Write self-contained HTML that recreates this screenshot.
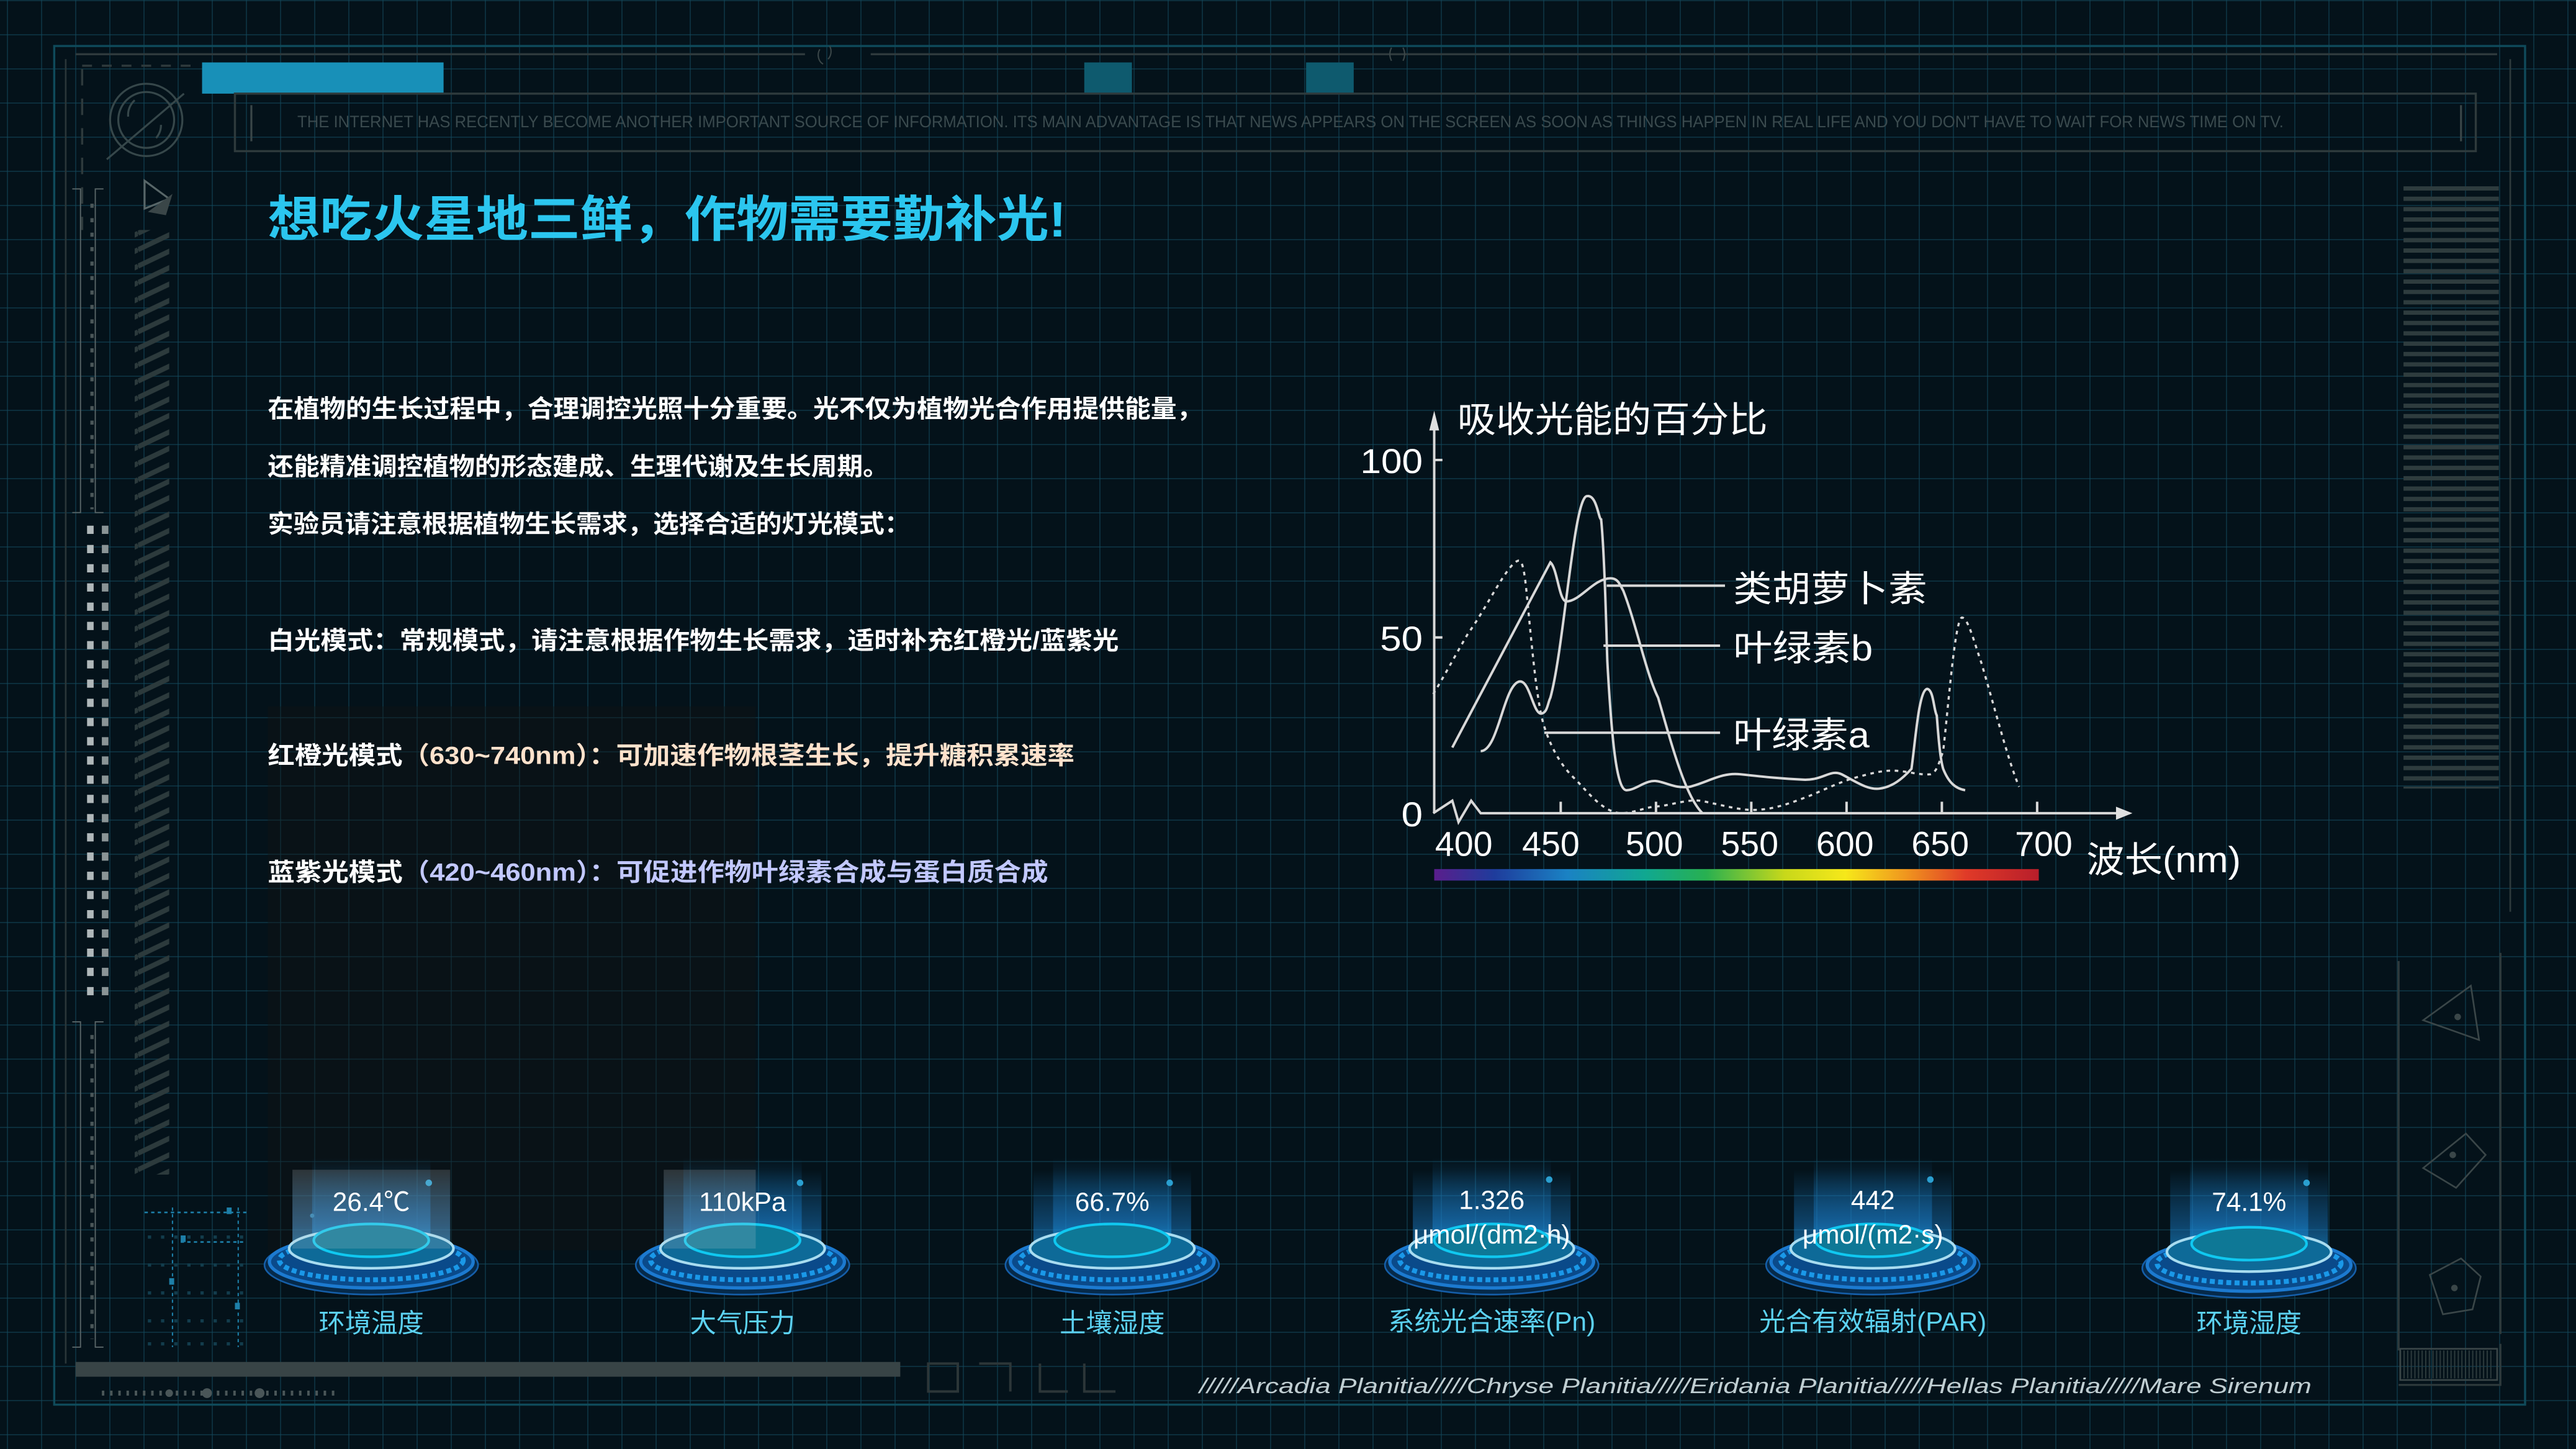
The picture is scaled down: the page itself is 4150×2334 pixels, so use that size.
<!DOCTYPE html>
<html><head><meta charset="utf-8">
<style>
html,body{margin:0;padding:0;}
body{width:4150px;height:2334px;overflow:hidden;background-color:#04121a;
background-image:
linear-gradient(to right, rgba(18,70,88,0.55) 2px, transparent 2px),
linear-gradient(to bottom, rgba(18,70,88,0.55) 2px, transparent 2px);
background-size:55px 55px,55px 55px;
background-position:11px 0,0 0;}
svg{position:absolute;left:0;top:0;width:4150px;height:2334px;}
text{font-family:"Liberation Sans","Noto Sans CJK SC",sans-serif;}
</style></head><body>
<svg viewBox="0 0 1568 882" preserveAspectRatio="none" xmlns="http://www.w3.org/2000/svg">
<defs>
<linearGradient id="spec" x1="0" x2="1" y1="0" y2="0">
<stop offset="0" stop-color="#5a1e8c"/><stop offset="0.1" stop-color="#1e3c9c"/><stop offset="0.22" stop-color="#1a82c4"/><stop offset="0.35" stop-color="#10a890"/><stop offset="0.45" stop-color="#28b050"/><stop offset="0.58" stop-color="#c8d81a"/><stop offset="0.68" stop-color="#f6e81a"/><stop offset="0.78" stop-color="#f0961e"/><stop offset="0.88" stop-color="#e03a28"/><stop offset="1" stop-color="#b81e2a"/>
</linearGradient>
<linearGradient id="col" x1="0" x2="0" y1="0" y2="1">
<stop offset="0" stop-color="#1a8ad8" stop-opacity="0"/><stop offset="0.6" stop-color="#1a7cc8" stop-opacity="0.45"/><stop offset="1" stop-color="#1a9ae0" stop-opacity="0.7"/>
</linearGradient>
<pattern id="hatch" width="21" height="10" patternUnits="userSpaceOnUse"><path d="M0 12 L21 2 M0 2 L21 -8 M0 22 L21 12" stroke="#2c3a3c" stroke-width="3"/></pattern>
<pattern id="hl" width="10" height="6.3" patternUnits="userSpaceOnUse"><rect width="10" height="2.6" fill="#2e3c3e"/></pattern>
<pattern id="vl" width="2.2" height="10" patternUnits="userSpaceOnUse"><rect width="0.7" height="10" fill="#2e3c3e"/></pattern>
</defs>

<rect x="33" y="28" width="1504" height="827" fill="none" stroke="#0f4a5a" stroke-width="1.3"/>
<line x1="46" y1="33" x2="490" y2="33" stroke="#2e3a3c" stroke-width="1.3"/>
<line x1="530" y1="33" x2="1520" y2="33" stroke="#2e3a3c" stroke-width="1.3"/>
<line x1="1528" y1="36" x2="1528" y2="555" stroke="#2e3a3c" stroke-width="1"/>
<line x1="40" y1="36" x2="40" y2="830" stroke="#2a3638" stroke-width="1"/>
<path d="M499 30 a5 6 0 0 0 2 9 M505 28 a5 6 0 0 1 -1 8" fill="none" stroke="#3a4648" stroke-width="0.8"/>
<path d="M847 29 q-2 4 0 8 M854 29 q2 4 0 8" fill="none" stroke="#3a4648" stroke-width="0.8"/>
<path d="M50 40 H120" stroke="#2e3a3c" stroke-width="1.3" stroke-dasharray="6 6"/>
<path d="M50 42 V140" stroke="#2e3a3c" stroke-width="1.3" stroke-dasharray="10 8"/>
<rect x="123" y="38" width="147" height="19" fill="#1890b8"/>
<rect x="660" y="38" width="29" height="19" fill="#0e5a6e"/>
<rect x="795" y="38" width="29" height="19" fill="#0e5a6e"/>
<rect x="143" y="57" width="1364" height="35" fill="none" stroke="#2e3a3c" stroke-width="1.3"/>
<line x1="153" y1="64" x2="153" y2="86" stroke="#3a4648" stroke-width="1.2"/>
<line x1="1498" y1="64" x2="1498" y2="86" stroke="#3a4648" stroke-width="1.2"/>
<text x="181" y="77.5" font-size="10" fill="#3a4a4e" textLength="1209" lengthAdjust="spacingAndGlyphs">THE INTERNET HAS RECENTLY BECOME ANOTHER IMPORTANT SOURCE OF INFORMATION. ITS MAIN ADVANTAGE IS THAT NEWS APPEARS ON THE SCREEN AS SOON AS THINGS HAPPEN IN REAL LIFE AND YOU DON'T HAVE TO WAIT FOR NEWS TIME ON TV.</text>

<g fill="none" stroke="#36474a" stroke-width="1.2">
<circle cx="89" cy="73" r="22"/><circle cx="89" cy="73" r="17"/>
<path d="M82 61 a12 12 0 0 0 -4 10"/><path d="M98 76 a12 12 0 0 1 -3 8"/>
<line x1="65" y1="97" x2="112" y2="57"/>
</g>
<path d="M88 110 L103 121 L88 127 Z" fill="none" stroke="#586668" stroke-width="1.2"/>
<path d="M90 129 L105 118 L101 131 Z" fill="#3a4648"/>
<path d="M44 115 H49 V312 H44 M63 115 H58 V312 H63" fill="none" stroke="#5a6668" stroke-width="0.7"/>
<path d="M44 622 H49 V820 H44 M63 622 H58 V820 H63" fill="none" stroke="#5a6668" stroke-width="0.7"/>
<path d="M56 124 V310" stroke="#4a5658" stroke-width="2" stroke-dasharray="2.5 6.3"/>
<path d="M56 630 V815" stroke="#4a5658" stroke-width="2" stroke-dasharray="2.5 6.3"/>
<rect x="82" y="140" width="21" height="575" fill="url(#hatch)"/>
<path d="M55 320 V612" stroke="#b0b8ba" stroke-width="4" stroke-dasharray="5 6.7"/>
<path d="M64 320 V612" stroke="#8a9496" stroke-width="4" stroke-dasharray="5 6.7"/>
<g fill="#1d7fa8">
<path d="M88 738 H150" stroke="#1d7fa8" stroke-width="1" stroke-dasharray="2 2"/>
<path d="M110 756 H150" stroke="#1d7fa8" stroke-width="1" stroke-dasharray="2 2"/>
<path d="M105 735 V820 M145 735 V820" stroke="#1d7fa8" stroke-width="0.8" stroke-dasharray="2 2"/>
<rect x="138" y="735" width="3" height="4"/><rect x="110" y="752" width="3" height="4"/><rect x="103" y="778" width="3" height="4"/><rect x="143" y="793" width="3" height="4"/>
</g>
<path d="M90 753 H150 M90 770 H150 M90 787 H150 M90 804 H150 M90 818 H150" stroke="#123c4c" stroke-width="2" stroke-dasharray="2 6"/>
<rect x="46" y="829" width="502" height="9" fill="#384446"/>
<path d="M62 848 H207" stroke="#4a5658" stroke-width="3" stroke-dasharray="1.5 3.5"/>
<circle cx="126" cy="848" r="3" fill="#4a5658"/><circle cx="158" cy="848" r="3" fill="#4a5658"/><circle cx="103" cy="848" r="2.3" fill="#4a5658"/>
<g fill="none" stroke="#2c3638" stroke-width="1.5">
<rect x="565" y="830" width="18" height="17"/>
<path d="M596 830 H615 V847"/><path d="M633 830 V847 H650"/><path d="M660 830 V847 H679"/>
</g>
<rect x="1463" y="110" width="58" height="370" fill="url(#hl)"/>
<line x1="1460" y1="585" x2="1460" y2="822" stroke="#2e3a3c" stroke-width="1.3"/>
<line x1="1522" y1="580" x2="1522" y2="812" stroke="#2e3a3c" stroke-width="1.3"/>
<path d="M1522 818 V843 H1460" fill="none" stroke="#2e3a3c" stroke-width="1.2"/>
<rect x="1461" y="822" width="57" height="17" fill="url(#vl)"/>
<g fill="none" stroke="#3a4648" stroke-width="1">
<path d="M1504 600 L1475 621 L1509 633 Z"/>
<path d="M1501 690 L1475 711 L1495 723 L1513 703 Z"/>
<path d="M1498 766 L1479 776 L1487 800 L1505 797 L1510 777 Z"/>
<rect x="1461" y="821" width="59" height="19"/>
</g>
<g fill="#3a4648"><circle cx="1496" cy="619" r="2"/><circle cx="1493" cy="703" r="2"/><circle cx="1494" cy="784" r="2"/></g>

<rect x="163" y="430" width="297" height="331" fill="#121314" opacity="0.4"/>

<text x="163" y="144" font-size="30" font-weight="bold" fill="#2bc6ef" textLength="486" lengthAdjust="spacingAndGlyphs">想吃火星地三鲜，作物需要勤补光!</text>
<g font-size="15" font-weight="bold" fill="#ffffff">
<text x="163" y="254" textLength="569" lengthAdjust="spacingAndGlyphs">在植物的生长过程中，合理调控光照十分重要。光不仅为植物光合作用提供能量，</text>
<text x="163" y="289" textLength="378" lengthAdjust="spacingAndGlyphs">还能精准调控植物的形态建成、生理代谢及生长周期。</text>
<text x="163" y="324" textLength="391" lengthAdjust="spacingAndGlyphs">实验员请注意根据植物生长需求，选择合适的灯光模式：</text>
<text x="163" y="395" textLength="518" lengthAdjust="spacingAndGlyphs">白光模式：常规模式，请注意根据作物生长需求，适时补充红橙光/蓝紫光</text>
<text x="163" y="465" textLength="491" lengthAdjust="spacingAndGlyphs">红橙光模式<tspan fill="#ffe2cc">（630~740nm）：可加速作物根茎生长，提升糖积累速率</tspan></text>
<text x="163" y="536" textLength="475" lengthAdjust="spacingAndGlyphs">蓝紫光模式<tspan fill="#c2c8ff">（420~460nm）：可促进作物叶绿素合成与蛋白质合成</tspan></text>
</g>

<g stroke="#d8d8d8" fill="none" stroke-width="1.5">
<line x1="873" y1="495" x2="873" y2="256"/>
<path d="M870 262 L873 250 L876 262 Z" fill="#e0e0e0" stroke="none"/>
<path d="M872.4 495 L884 487.4 L887.8 500.4 L895.5 487.4 L901.3 495 L1290 495"/>
<path d="M1288 491 L1298 495 L1288 499 Z" fill="#e0e0e0" stroke="none"/>
<path d="M873 280 H878 M873 388 H878 M950 495 V488 M1008 495 V488 M1066 495 V488 M1124 495 V488 M1182 495 V488 M1240 495 V488"/>
<path d="M901.3 457.2 C912 457 915 418 924.5 414.9 C931 413 933 434 938 434.4 C942 434 942 428 943.7 424.7 C952 395 958 302 966 302 C972 301 973 316 974.6 316.2 C977 340 978 395 978.4 403 C981 450 984 481 990 481 C996 481 1002 474 1009.3 475.6 C1016 477 1020 480 1028.6 478.9 C1040 476 1048 470 1059.4 471.3 C1075 473 1085 474 1097.9 474.6 C1110 475 1114 468 1121 471.3 C1130 476 1137 481 1144.2 480 C1152 479 1158 474 1163.5 468 C1166 450 1168 420 1173.1 419.3 C1177 420 1177 432 1178.9 435.5 C1180 450 1181 462 1182.8 468 C1186 476 1190 480 1196.2 481"/>
<path d="M884 455 L943.7 342.3 C948 346 949 366 953.4 366.1 C962 366 970 352 980.4 352 C985 352 986 356 988.1 359.6 C996 380 1002 410 1009.3 424.7 C1018 455 1026 485 1036.3 495"/>
<path d="M872.4 422.5 C880 410 888 395 893.6 385.6 C905 370 918 342 924.5 341.2 C928 341 929 360 930.2 370.5 C933 400 936 430 939.9 442 C945 458 952 468 959.2 474.6 C968 484 976 494 986.2 495 C995 495 1002 491 1009.3 490.8 C1018 490 1028 486 1036.3 487.6 C1048 490 1058 493 1067.1 493 C1080 493 1092 488 1101.8 484.3 C1112 480 1120 476 1128.8 473.5 C1138 471 1145 469 1151.9 469.1 C1160 469 1168 472 1175 471.3 C1179 470 1180 465 1182.8 457.2 C1186 430 1190 376 1194.3 375.9 C1198 376 1202 392 1205.9 403 C1214 430 1222 462 1229 478.9" stroke-dasharray="2.2 2.8" stroke-width="1.3"/>
<path d="M978 356.5 H1050 M976 393 H1047 M940 446 H1047" stroke-width="1.5"/>
</g>
<g fill="#ffffff" font-size="21">
<text x="887" y="263" font-size="22" textLength="189" lengthAdjust="spacingAndGlyphs">吸收光能的百分比</text>
<text x="828" y="288" textLength="38" lengthAdjust="spacingAndGlyphs">100</text>
<text x="840" y="396" textLength="26" lengthAdjust="spacingAndGlyphs">50</text>
<text x="853" y="503" textLength="13" lengthAdjust="spacingAndGlyphs">0</text>
<g text-anchor="middle">
<text x="891" y="521">400</text><text x="944" y="521">450</text><text x="1007" y="521">500</text><text x="1065" y="521">550</text><text x="1123" y="521">600</text><text x="1181" y="521">650</text><text x="1244" y="521">700</text>
</g>
<text x="1270" y="531" font-size="22" textLength="94" lengthAdjust="spacingAndGlyphs">波长(nm)</text>
<text x="1055" y="366" font-size="22" textLength="118" lengthAdjust="spacingAndGlyphs">类胡萝卜素</text>
<text x="1055" y="402" font-size="22" textLength="85" lengthAdjust="spacingAndGlyphs">叶绿素b</text>
<text x="1055" y="455" font-size="22" textLength="83" lengthAdjust="spacingAndGlyphs">叶绿素a</text>
</g>
<rect x="873" y="529" width="368" height="7" fill="url(#spec)"/>

<g>
<g transform="translate(226,0)">
<rect x="-48" y="712" width="96" height="55" fill="url(#col)"/><rect x="-36" y="705" width="72" height="60" fill="url(#col)"/>
<ellipse cx="0" cy="770" rx="65" ry="18" fill="#062a4a" stroke="#155ea8" stroke-width="1"/>
<ellipse cx="0" cy="768" rx="62" ry="16" fill="#0a4a8a" stroke="#1c7ad0" stroke-width="2"/>
<ellipse cx="0" cy="767" rx="56" ry="12" fill="none" stroke="#1a98e8" stroke-width="3" stroke-dasharray="3 2"/>
<ellipse cx="0" cy="760" rx="50" ry="12" fill="#0e6a98" stroke="#a8dcf0" stroke-width="1.6"/>
<ellipse cx="0" cy="755" rx="35" ry="10" fill="#0e7896" stroke="#10c8f0" stroke-width="1.6"/>
<circle cx="35" cy="720" r="2" fill="#2a9fd0"/><circle cx="-36" cy="740" r="1.3" fill="#2a7fb0"/>
<rect x="-48" y="712" width="96" height="48" fill="#d0d0d0" opacity="0.18"/>
<text x="0" y="737" text-anchor="middle" font-size="16" fill="#fff">26.4℃</text>
<text x="0" y="811" text-anchor="middle" font-size="16" fill="#5cd2f2">环境温度</text>
</g>
<g transform="translate(452,0)">
<rect x="-48" y="712" width="96" height="55" fill="url(#col)"/><rect x="-36" y="705" width="72" height="60" fill="url(#col)"/>
<ellipse cx="0" cy="770" rx="65" ry="18" fill="#062a4a" stroke="#155ea8" stroke-width="1"/>
<ellipse cx="0" cy="768" rx="62" ry="16" fill="#0a4a8a" stroke="#1c7ad0" stroke-width="2"/>
<ellipse cx="0" cy="767" rx="56" ry="12" fill="none" stroke="#1a98e8" stroke-width="3" stroke-dasharray="3 2"/>
<ellipse cx="0" cy="760" rx="50" ry="12" fill="#0e6a98" stroke="#a8dcf0" stroke-width="1.6"/>
<ellipse cx="0" cy="755" rx="35" ry="10" fill="#0e7896" stroke="#10c8f0" stroke-width="1.6"/>
<circle cx="35" cy="720" r="2" fill="#2a9fd0"/>
<rect x="-48" y="712" width="56" height="48" fill="#d0d0d0" opacity="0.18"/>
<text x="0" y="737" text-anchor="middle" font-size="16" fill="#fff">110kPa</text>
<text x="0" y="811" text-anchor="middle" font-size="16" fill="#5cd2f2">大气压力</text>
</g>
<g transform="translate(677,0)">
<rect x="-48" y="712" width="96" height="55" fill="url(#col)"/><rect x="-36" y="705" width="72" height="60" fill="url(#col)"/>
<ellipse cx="0" cy="770" rx="65" ry="18" fill="#062a4a" stroke="#155ea8" stroke-width="1"/>
<ellipse cx="0" cy="768" rx="62" ry="16" fill="#0a4a8a" stroke="#1c7ad0" stroke-width="2"/>
<ellipse cx="0" cy="767" rx="56" ry="12" fill="none" stroke="#1a98e8" stroke-width="3" stroke-dasharray="3 2"/>
<ellipse cx="0" cy="760" rx="50" ry="12" fill="#0e6a98" stroke="#a8dcf0" stroke-width="1.6"/>
<ellipse cx="0" cy="755" rx="35" ry="10" fill="#0e7896" stroke="#10c8f0" stroke-width="1.6"/>
<circle cx="35" cy="720" r="2" fill="#2a9fd0"/>
<text x="0" y="737" text-anchor="middle" font-size="16" fill="#fff">66.7%</text>
<text x="0" y="811" text-anchor="middle" font-size="16" fill="#5cd2f2">土壤湿度</text>
</g>
<g transform="translate(908,0)">
<rect x="-48" y="712" width="96" height="55" fill="url(#col)"/><rect x="-36" y="705" width="72" height="60" fill="url(#col)"/>
<ellipse cx="0" cy="770" rx="65" ry="18" fill="#062a4a" stroke="#155ea8" stroke-width="1"/>
<ellipse cx="0" cy="768" rx="62" ry="16" fill="#0a4a8a" stroke="#1c7ad0" stroke-width="2"/>
<ellipse cx="0" cy="767" rx="56" ry="12" fill="none" stroke="#1a98e8" stroke-width="3" stroke-dasharray="3 2"/>
<ellipse cx="0" cy="760" rx="50" ry="12" fill="#0e6a98" stroke="#a8dcf0" stroke-width="1.6"/>
<ellipse cx="0" cy="755" rx="35" ry="10" fill="#0e7896" stroke="#10c8f0" stroke-width="1.6"/>
<circle cx="35" cy="718" r="2" fill="#2a9fd0"/>
<text x="0" y="736" text-anchor="middle" font-size="16" fill="#fff">1.326</text>
<text x="0" y="757" text-anchor="middle" font-size="16" fill="#fff">μmol/(dm2·h)</text>
<text x="0" y="810" text-anchor="middle" font-size="16" fill="#5cd2f2">系统光合速率(Pn)</text>
</g>
<g transform="translate(1140,0)">
<rect x="-48" y="712" width="96" height="55" fill="url(#col)"/><rect x="-36" y="705" width="72" height="60" fill="url(#col)"/>
<ellipse cx="0" cy="770" rx="65" ry="18" fill="#062a4a" stroke="#155ea8" stroke-width="1"/>
<ellipse cx="0" cy="768" rx="62" ry="16" fill="#0a4a8a" stroke="#1c7ad0" stroke-width="2"/>
<ellipse cx="0" cy="767" rx="56" ry="12" fill="none" stroke="#1a98e8" stroke-width="3" stroke-dasharray="3 2"/>
<ellipse cx="0" cy="760" rx="50" ry="12" fill="#0e6a98" stroke="#a8dcf0" stroke-width="1.6"/>
<ellipse cx="0" cy="755" rx="35" ry="10" fill="#0e7896" stroke="#10c8f0" stroke-width="1.6"/>
<circle cx="35" cy="718" r="2" fill="#2a9fd0"/>
<text x="0" y="736" text-anchor="middle" font-size="16" fill="#fff">442</text>
<text x="0" y="757" text-anchor="middle" font-size="16" fill="#fff">μmol/(m2·s)</text>
<text x="0" y="810" text-anchor="middle" font-size="16" fill="#5cd2f2">光合有效辐射(PAR)</text>
</g>
<g transform="translate(1369,0)">
<rect x="-48" y="712" width="96" height="55" fill="url(#col)"/><rect x="-36" y="705" width="72" height="60" fill="url(#col)"/>
<ellipse cx="0" cy="772" rx="65" ry="18" fill="#062a4a" stroke="#155ea8" stroke-width="1"/>
<ellipse cx="0" cy="770" rx="62" ry="16" fill="#0a4a8a" stroke="#1c7ad0" stroke-width="2"/>
<ellipse cx="0" cy="769" rx="56" ry="12" fill="none" stroke="#1a98e8" stroke-width="3" stroke-dasharray="3 2"/>
<ellipse cx="0" cy="762" rx="50" ry="12" fill="#0e6a98" stroke="#a8dcf0" stroke-width="1.6"/>
<ellipse cx="0" cy="757" rx="35" ry="10" fill="#0e7896" stroke="#10c8f0" stroke-width="1.6"/>
<circle cx="35" cy="720" r="2" fill="#2a9fd0"/>
<text x="0" y="737" text-anchor="middle" font-size="16" fill="#fff">74.1%</text>
<text x="0" y="811" text-anchor="middle" font-size="16" fill="#5cd2f2">环境湿度</text>
</g>
</g>

<text x="730" y="848" font-size="13" font-style="italic" fill="#c0ced2" textLength="677" lengthAdjust="spacingAndGlyphs">/////Arcadia Planitia/////Chryse Planitia/////Eridania Planitia/////Hellas Planitia/////Mare Sirenum</text>
</svg>
</body></html>
